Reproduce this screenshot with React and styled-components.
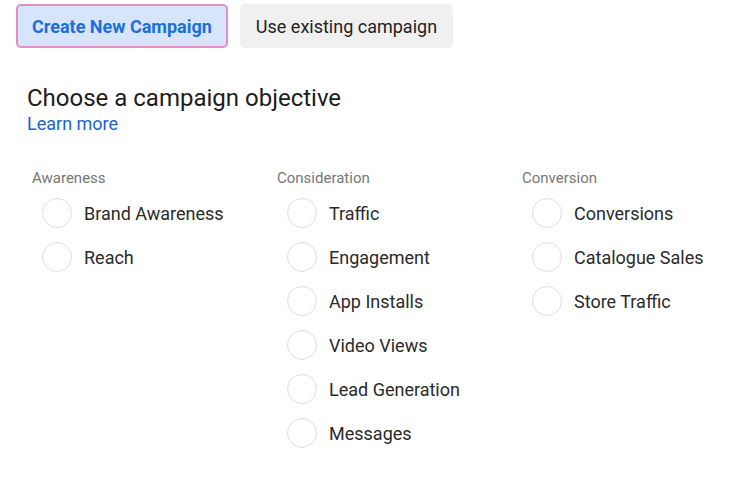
import React from "react";
import styled, { createGlobalStyle } from "styled-components";

const Global = createGlobalStyle`
  body { margin: 0; background: #fff; font-family: Roboto, "Liberation Sans", sans-serif; }
`;

const Page = styled.div`
  padding: 4px 16px 0 16px;
`;

const Tabs = styled.div`
  display: flex;
  gap: 12px;
`;

const TabButton = styled.button`
  height: 44px;
  box-sizing: border-box;
  padding: 0 14px;
  font-family: Roboto, "Liberation Sans", sans-serif;
  font-size: 18px;
  border-radius: 5px;
  cursor: pointer;
  border: ${(p) => (p.$active ? "2px solid #e38fc4" : "2px solid transparent")};
  background: ${(p) => (p.$active ? "#d7e5fc" : "#f0f0f0")};
  color: ${(p) => (p.$active ? "#1b6fdb" : "#222")};
  font-weight: ${(p) => (p.$active ? 700 : 400)};
`;

const Heading = styled.h2`
  margin: 36px 0 0 11px;
  font-size: 24px;
  font-weight: 400;
  color: #1c1c1c;
  line-height: 28px;
`;

const LearnMore = styled.a`
  display: block;
  margin-left: 11px;
  font-size: 18px;
  color: #1a65c9;
  text-decoration: none;
  line-height: 24px;
`;

const Columns = styled.div`
  display: grid;
  grid-template-columns: 245px 245px 245px;
  margin: 32px 0 0 16px;
`;

const Column = styled.div`
  display: flex;
  flex-direction: column;
`;

const Label = styled.div`
  font-size: 15px;
  color: #777;
  line-height: 20px;
  margin-bottom: 3px;
`;

const Option = styled.label`
  display: flex;
  align-items: center;
  gap: 12px;
  height: 44px;
  padding-left: 10px;
  font-size: 18px;
  color: #2a2a2a;
  cursor: pointer;
`;

const Radio = styled.span`
  width: 30px;
  height: 30px;
  box-sizing: border-box;
  border-radius: 50%;
  border: 1.5px solid #dedede;
  background: #fff;
  flex: none;
`;

const groups = [
  { label: "Awareness", items: ["Brand Awareness", "Reach"] },
  {
    label: "Consideration",
    items: ["Traffic", "Engagement", "App Installs", "Video Views", "Lead Generation", "Messages"],
  },
  { label: "Conversion", items: ["Conversions", "Catalogue Sales", "Store Traffic"] },
];

export default function App() {
  return (
    <Page>
      <Global />
      <Tabs>
        <TabButton $active>Create New Campaign</TabButton>
        <TabButton>Use existing campaign</TabButton>
      </Tabs>
      <Heading>Choose a campaign objective</Heading>
      <LearnMore href="#">Learn more</LearnMore>
      <Columns>
        {groups.map((g) => (
          <Column key={g.label}>
            <Label>{g.label}</Label>
            {g.items.map((it) => (
              <Option key={it}>
                <Radio />
                {it}
              </Option>
            ))}
          </Column>
        ))}
      </Columns>
    </Page>
  );
}
